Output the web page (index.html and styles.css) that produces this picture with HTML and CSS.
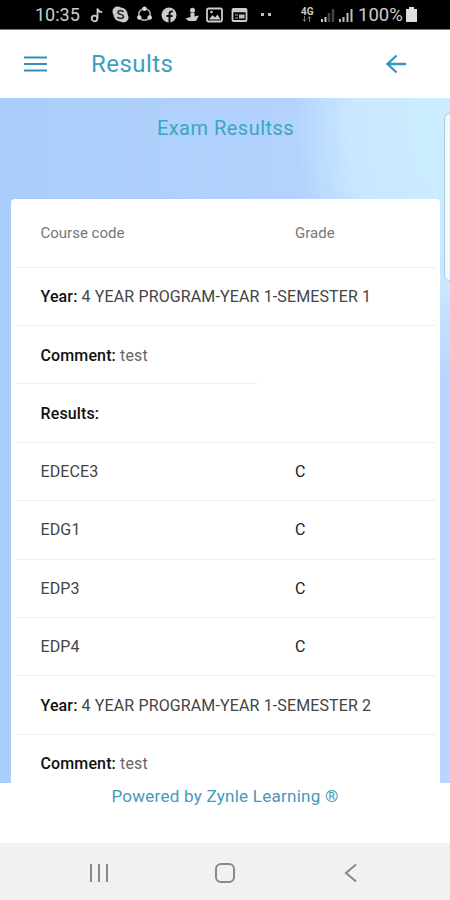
FILE: index.html
```html
<!DOCTYPE html>
<html lang="en">
<head>
<meta charset="UTF-8">
<meta name="viewport" content="width=device-width, initial-scale=1.0">
<title>Results</title>
<link rel="stylesheet" href="styles.css">
</head>
<body>
  <div class="status-bar">
    <span class="clock">10:35</span>
    <div class="notifications">
      <svg width="14" height="16" viewBox="0 0 14 16"><circle cx="4.5" cy="11.500" r="2.800" fill="none" stroke="#ccc" stroke-width="1.800"/><path d="M7.500 11.500V1.500c.5 2.500 2 3.500 4.700 3.700" fill="none" stroke="#ccc" stroke-width="1.800"/></svg>
      <svg width="17" height="17" viewBox="0 0 17 17"><circle cx="5.5" cy="5.5" r="5" fill="#ccc"/><circle cx="11.5" cy="11.5" r="5" fill="#ccc"/><circle cx="8.5" cy="8.5" r="7" fill="#ccc"/><path d="M11.5 6C10.500 4 6 4 6 6.500S11.500 8 11.500 10.500 6.500 13 5.500 11" fill="none" stroke="#333" stroke-width="1.700"/></svg>
      <svg width="17" height="17" viewBox="0 0 17 17"><circle cx="8.500" cy="8.500" r="5.800" fill="none" stroke="#aaa" stroke-width="1.500"/><circle cx="8.500" cy="2.800" r="2.200" fill="#ddd"/><circle cx="3.300" cy="11.500" r="2.200" fill="#ddd"/><circle cx="13.700" cy="11.500" r="2.200" fill="#ddd"/></svg>
      <svg width="16" height="16" viewBox="0 0 16 16"><circle cx="8" cy="8" r="7.500" fill="#ccc"/><path d="M8.500 16V7c0-2 1-2.800 3.300-2.500M5.500 9h6" fill="none" stroke="#111" stroke-width="2"/></svg>
      <svg width="14" height="16" viewBox="0 0 14 16"><circle cx="7.500" cy="3.200" r="2.500" fill="#ccc"/><path d="M5.500 6h4v3.500l4.500-1-3 5.500H3.500L.5 11.500l5-1.500z" fill="#ccc"/></svg>
      <svg width="17" height="16" viewBox="0 0 17 16"><rect x="1" y="1.500" width="15" height="13" rx="1.500" fill="none" stroke="#ccc" stroke-width="1.800"/><path d="M3 12.500 6.500 8l2.500 2.500 2.500-3 3 5z" fill="#ccc"/><circle cx="5.500" cy="5" r="1.300" fill="#ccc"/></svg>
      <svg width="17" height="16" viewBox="0 0 17 16"><rect x="1.500" y="2" width="14" height="12" rx="1" fill="none" stroke="#ccc" stroke-width="1.800"/><path d="M2 4h13" stroke="#ccc" stroke-width="2.500"/><path d="M4 8h3M4 11h3" stroke="#777" stroke-width="1.500"/><path d="M8 9.500h5.500" stroke="#bbb" stroke-width="4"/></svg>
    </div>
    <div class="dots"><i></i><i></i></div>
    <div class="signals">
      <div class="network"><span>4G</span><svg width="12" height="6" viewBox="0 0 10 6"><path d="M2.500 0v5M1 3.500 2.500 5.500 4 3.500M7.500 6V1M6 2.500 7.500.5 9 2.500" fill="none" stroke="#777"/></svg></div>
      <svg width="14" height="14" viewBox="0 0 14 14"><path d="M1 14v-3M4.500 14V9" stroke="#ccc" stroke-width="2"/><path d="M8 14V5M12 14V1" stroke="#444" stroke-width="2.500"/></svg>
      <svg width="14" height="14" viewBox="0 0 14 14"><path d="M1 14v-3M4.500 14V9M8.500 14V5M12.500 14V1" stroke="#bbb" stroke-width="2"/></svg>
      <span class="percent">100%</span>
      <svg width="11" height="15" viewBox="0 0 11 15"><path d="M3 0h5v2h3v13H0V2h3z" fill="#ddd"/></svg>
    </div>
  </div>

  <header class="toolbar">
    <svg class="menu" width="24" height="18" viewBox="0 0 24 18"><path d="M0 2.500h23M0 9h23M0 15.500h23" stroke="#318fb8" stroke-width="2"/></svg>
    <h1>Results</h1>
    <svg class="back" width="22" height="20" viewBox="0 0 22 20"><path d="M21 10H2.500M11.500 1.500 2.500 10l9 8.500" fill="none" stroke="#2b98c6" stroke-width="2.300"/></svg>
  </header>

  <main class="content">
    <div class="side-panel"></div>
    <h2>Exam Resultss</h2>
    <div class="card">
      <div class="row head"><span>Course code</span><span>Grade</span></div>
      <div class="row wide"><p><b>Year:</b> 4 YEAR PROGRAM-YEAR 1-SEMESTER 1</p></div>
      <div class="row half"><p><b>Comment:</b> <small>test</small></p></div>
      <div class="row"><b>Results:</b></div>
      <div class="row"><span>EDECE3</span><span class="grade">C</span></div>
      <div class="row"><span>EDG1</span><span class="grade">C</span></div>
      <div class="row"><span>EDP3</span><span class="grade">C</span></div>
      <div class="row"><span>EDP4</span><span class="grade">C</span></div>
      <div class="row wide"><p><b>Year:</b> 4 YEAR PROGRAM-YEAR 1-SEMESTER 2</p></div>
      <div class="row"><p><b>Comment:</b> <small>test</small></p></div>
    </div>
  </main>

  <footer class="footer">Powered by Zynle Learning ®</footer>

  <nav class="nav-bar">
    <svg width="20" height="20" viewBox="0 0 20 20"><path d="M2 1v18M10 1v18M18 1v18" stroke="#888" stroke-width="2"/></svg>
    <svg width="20" height="20" viewBox="0 0 20 20"><rect x="1" y="1" width="18" height="18" rx="5" fill="none" stroke="#888" stroke-width="2"/></svg>
    <svg width="20" height="20" viewBox="0 0 20 20"><path d="M15 1.500 5 10l10 8.500" fill="none" stroke="#888" stroke-width="2"/></svg>
  </nav>
</body>
</html>
```

FILE: styles.css
```css
* {
  box-sizing: border-box;
}
body {
  margin: 0;
  height: 900px;
  overflow: hidden;
  display: flex;
  flex-direction: column;
  font-family: Roboto, sans-serif;
  background-color: #fff;
}
h1, h2, p {
  margin: 0;
  font-weight: 400;
}
svg {
  display: block;
  flex: none;
}
.status-bar {
  height: 30px;
  flex: none;
  display: flex;
  align-items: center;
  padding-left: 35px;
  background-color: #000;
  color: #ccc;
  border-bottom: 1px solid #777;
}
.clock {
  width: 55px;
  font-size: 18px;
}
.notifications {
  display: flex;
  align-items: center;
  justify-content: space-between;
  width: 158px;
}
.dots {
  display: flex;
  gap: 4px;
  margin-left: 13px;
}
.dots i {
  width: 3px;
  height: 3px;
  background-color: #bbb;
}
.signals {
  display: flex;
  align-items: center;
  gap: 4px;
  margin-left: 30px;
}
.network {
  width: 14px;
  margin-right: 2px;
  font-size: 10px;
  line-height: 8px;
  font-weight: bold;
}
.percent {
  margin-left: 1px;
  width: 44px;
  font-size: 18.5px;
}
.toolbar {
  height: 68px;
  flex: none;
  display: flex;
  align-items: center;
  padding: 0 43px 0 24px;
}
.toolbar h1 {
  margin-left: 43px;
  font-size: 24px;
  letter-spacing: 0.45px;
  color: #3c9fbd;
}
.back {
  margin-left: auto;
}
.content {
  position: relative;
  height: 685px;
  flex: none;
  padding: 0 10px 0 11px;
  overflow: hidden;
  background: radial-gradient(ellipse 155px 260px at 100% 20px, #cdeeff 0%, #c9e7ff 65%, rgba(184,213,255,0) 100%), linear-gradient(90deg, #aacdfb, #b8d6ff);
}
.content h2 {
  height: 101px;
  padding-top: 17px;
  font-size: 20px;
  letter-spacing: 0.48px;
  line-height: 26px;
  text-align: center;
  color: #3aa6bf;
}
.side-panel {
  position: absolute;
  top: 15px;
  right: -10px;
  width: 16px;
  height: 168px;
  border: 1px solid #aacbd9;
  border-radius: 6px;
  background-color: #effbff;
}
.card {
  height: 600px;
  padding: 0 5px;
  border-radius: 4px 4px 0 0;
  background-color: #fff;
}
.row {
  height: 58.4px;
  display: grid;
  grid-template-columns: 254.5px 1fr;
  align-items: center;
  padding-left: 24.5px;
  font-size: 16px;
  letter-spacing: 0.13px;
  color: #444;
  border-bottom: 1px solid #eee;
}
.row b {
  font-weight: 500;
  color: #111;
}
.row small {
  font-size: 16px;
  color: #666;
}
.head {
  height: 68.6px;
  font-size: 15px;
  letter-spacing: 0;
  color: #777;
}
.wide {
  grid-template-columns: 1fr;
}
.half {
  border-bottom: none;
  background: linear-gradient(#eee, #eee) left bottom / 241px 1px no-repeat;
}
.grade {
  color: #222;
}
.footer {
  height: 60px;
  flex: none;
  padding-top: 1px;
  font-size: 17px;
  letter-spacing: 0.26px;
  line-height: 24px;
  text-align: center;
  color: #4599b9;
}
.nav-bar {
  flex: 1;
  display: flex;
  align-items: center;
  justify-content: space-between;
  padding: 3px 89px 0;
  background-color: #f1f1f1;
}
```
